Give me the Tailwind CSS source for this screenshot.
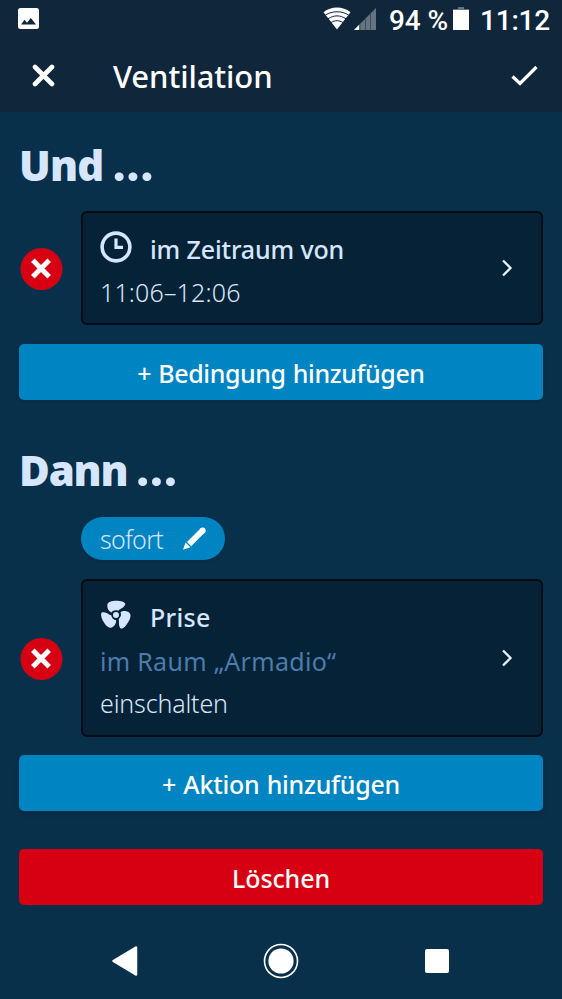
<!DOCTYPE html>
<html lang="de">
<head>
<meta charset="utf-8">
<title>Ventilation</title>
<script src="https://cdn.jsdelivr.net/npm/@tailwindcss/browser@4"></script>
</head>
<body class="bg-[#08304b]">
<div class="flex h-[999px] w-[562px] flex-col overflow-hidden bg-[#08304b] font-['Noto_Sans',sans-serif] text-[25px] text-[#d6e6ff]">
  <header class="h-[112px] shrink-0 bg-[#10263b] text-white">
    <div class="flex h-10 items-center pr-[12px] pl-[18px] font-[Roboto,sans-serif]">
      <svg class="-mt-[3px] size-[21px]" viewBox="0 0 21 21"><rect width="21" height="21" rx="2.5" fill="#fff"/><path d="M3 16.6 6.6 11.8 9 14.7 12.8 10 18 16.6Z" fill="#10263b"/></svg>
      <svg class="-mt-[3px] ml-auto h-[23px] w-[28px]" viewBox="0 0 28 23"><path d="M.5 5.2C4.500 2 9 .5 14 .5s9.500 1.500 13.500 4.700L14 22.500Z" fill="#fff"/><path d="M2.500 8C9 3.700 19 3.700 25.500 8M5 11.800c6-3.900 12-3.900 18 0M8 15.500c4-2.400 8-2.400 12 0" fill="none" stroke="#10263b" stroke-width="1"/></svg>
      <svg class="-mt-[2px] ml-[3px] h-[22px] w-[22px]" viewBox="0 0 22 22"><path d="M0 22 22 0V22Z" fill="#667481"/><path d="M0 22 5.200 16.800V22Z" fill="#fff"/><path d="M6 16V22M11.500 10.500V22M16.500 5.500V22" stroke="#3c4e5f" stroke-width="1"/></svg>
      <span class="ml-[13px] w-[59px] pt-[2px] text-[28px] leading-10 font-medium tracking-[-0.1px] whitespace-nowrap">94 %</span>
      <svg class="-mt-[2px] ml-[5px] h-[24px] w-[16px]" viewBox="0 0 16 24"><path d="M5 0h6v2h5v3H0V2h5Z" fill="#667481"/><path d="M0 3h16v20H0Z" fill="#fff"/></svg>
      <span class="ml-[11px] w-[70px] pt-[2px] text-[28px] leading-10 font-medium tracking-[-0.2px] whitespace-nowrap">11:12</span>
    </div>
    <div class="flex h-[72px] items-center pr-[24px] pl-[32px]">
      <svg class="-mt-[2px] size-[23px]" viewBox="0 0 23 23"><path d="M3 3 20 20M20 3 3 20" stroke="#fff" stroke-width="4.600" stroke-linecap="round"/></svg>
      <h1 class="ml-[58px] text-[31px] leading-[40px] font-medium tracking-[-0.100px] whitespace-nowrap">Ventilation</h1>
      <svg class="-mt-[2px] ml-auto h-[21px] w-[27px]" viewBox="0 0 27 21"><path d="M1.500 11.500 9 18.500 25.500 2" fill="none" stroke="#fff" stroke-width="3.200"/></svg>
    </div>
  </header>
  <main class="flex flex-col px-[19px]">
    <h2 class="mt-[24px] h-[60px] text-[42px] leading-[57px] font-black tracking-[-0.800px] whitespace-nowrap">Und <span class="-ml-[1px] font-[Lato,sans-serif] text-[54px] leading-[0] tracking-[1px]">...</span></h2>
    <div class="mt-[15px] flex items-center">
      <svg class="mr-[18px] ml-[1px] size-[43px]" viewBox="0 0 43 43"><circle cx="21.500" cy="22" r="21" fill="#d70012"/><path d="M12.800 13.300 29.200 29.700M29.200 13.300 12.800 29.700" stroke="#fff" stroke-width="5"/></svg>
      <section class="flex h-[114px] flex-1 items-center rounded-[6px] border-2 border-[#020d17] bg-[#062236] pr-[28px] pl-[17px]">
        <div class="flex-1 pt-[4px]">
          <div class="flex h-[43px] items-center">
            <svg class="-mt-[3px] size-[32px]" viewBox="0 0 32 32"><circle cx="16" cy="16" r="13.900" fill="none" stroke="#d6e6ff" stroke-width="3.600"/><path d="M16 7.500V16.300H23" fill="none" stroke="#d6e6ff" stroke-width="3.200"/></svg>
            <span class="ml-[18px] pt-[2px] leading-[43px] font-medium tracking-[-0.150px] whitespace-nowrap">im Zeitraum von</span>
          </div>
          <div class="h-[43px] leading-[45px] font-light tracking-[0.150px] whitespace-nowrap">11:06–12:06</div>
        </div>
        <svg class="h-[18px] w-[12px]" viewBox="0 0 12 18"><path d="M2 1.500 9.500 9 2 16.500" fill="none" stroke="#e6f0ff" stroke-width="2.300"/></svg>
      </section>
    </div>
    <button class="mt-[19px] h-[56px] rounded-[5px] bg-[#0084c2] pt-[1px] leading-[56px] font-medium tracking-[-0.400px] [word-spacing:1px] whitespace-nowrap text-white shadow-sm">+ Bedingung hinzufügen</button>
    <h2 class="mt-[41px] h-[60px] text-[42px] leading-[57px] font-black tracking-[-1.200px] whitespace-nowrap">Dann <span class="-ml-[1px] font-[Lato,sans-serif] text-[54px] leading-[0] tracking-[1px]">...</span></h2>
    <div class="mt-[16px] ml-[62px] flex h-[43px] w-[144px] items-center rounded-full bg-[#0084c2] pl-[19px] shadow-sm">
      <span class="w-[63px] pt-[2px] leading-[43px] font-light tracking-[-0.700px] whitespace-nowrap">sofort</span>
      <svg class="ml-[20px] size-[23px]" viewBox="0 0 23 23"><path d="M6 17.200 19.700 3.500" stroke="#fff" stroke-width="6"/><circle cx="19.700" cy="3.400" r="3" fill="#fff"/><path d="M2.600 15.500 7.400 20.200 0 22.800Z" fill="#fff"/><path d="M2.500 14.300 8.500 20.500" stroke="#0084c2" stroke-width="1"/></svg>
    </div>
    <div class="mt-[19px] flex items-center">
      <svg class="mr-[18px] ml-[1px] size-[43px]" viewBox="0 0 43 43"><circle cx="21.500" cy="22" r="21" fill="#d70012"/><path d="M12.800 13.300 29.200 29.700M29.200 13.300 12.800 29.700" stroke="#fff" stroke-width="5"/></svg>
      <section class="flex h-[158px] flex-1 items-center rounded-[6px] border-2 border-[#020d17] bg-[#062236] pr-[28px] pl-[17px]">
        <div class="flex-1 pt-[2px]">
          <div class="flex h-[44px] items-center">
            <svg class="-mt-[3px] ml-[1px] size-[30px]" viewBox="0 0 30 30"><g fill="#d6e6ff"><path id="blade" d="M10.500 12.500C7.500 11.200 6 8 6.300 4.900 6.700 1.800 10.800.8 15 .8c4.800 0 9 1.100 9.300 3.400C23.500 7 20.800 8.300 18.600 9.500L17.100 10.700C14.300 9.700 11.700 10.500 10.500 12.500Z"/><use href="#blade" transform="rotate(120 15 15)"/><use href="#blade" transform="rotate(240 15 15)"/><circle cx="15" cy="15" r="3"/></g></svg>
            <span class="ml-[19px] pt-[1px] leading-[44px] font-medium tracking-[0.300px] whitespace-nowrap">Prise</span>
          </div>
          <div class="h-[44px] leading-[46px] tracking-[0.300px] text-[#4a7cac] whitespace-nowrap">im Raum „Armadio“</div>
          <div class="h-[42px] leading-[42px] font-light tracking-[-0.150px] whitespace-nowrap">einschalten</div>
        </div>
        <svg class="h-[18px] w-[12px]" viewBox="0 0 12 18"><path d="M2 1.500 9.500 9 2 16.500" fill="none" stroke="#e6f0ff" stroke-width="2.300"/></svg>
      </section>
    </div>
    <button class="mt-[18px] h-[56px] rounded-[5px] bg-[#0084c2] pt-[1px] leading-[56px] font-medium tracking-[-0.250px] [word-spacing:1px] whitespace-nowrap text-white shadow-md">+ Aktion hinzufügen</button>
    <button class="mt-[38px] h-[56px] rounded-[5px] bg-[#d70012] pt-[1px] leading-[56px] font-medium tracking-[-0.100px] whitespace-nowrap text-white">Löschen</button>
  </main>
  <nav class="mt-[37px] flex h-[38px] items-center pl-[112px]">
    <svg class="h-[30px] w-[26px]" viewBox="0 0 26 30"><path d="M24 1.500V28.500L1.500 15Z" fill="#fff" stroke="#fff" stroke-width="2.500" stroke-linejoin="round"/></svg>
    <svg class="ml-[125px] size-[36px]" viewBox="0 0 36 36"><circle cx="18" cy="18" r="16.500" fill="none" stroke="#fff" stroke-width="1.600"/><circle cx="18" cy="18" r="12.600" fill="#fff"/></svg>
    <div class="ml-[126px] size-[24px] rounded-[2px] bg-white"></div>
  </nav>
</div>
</body>
</html>
